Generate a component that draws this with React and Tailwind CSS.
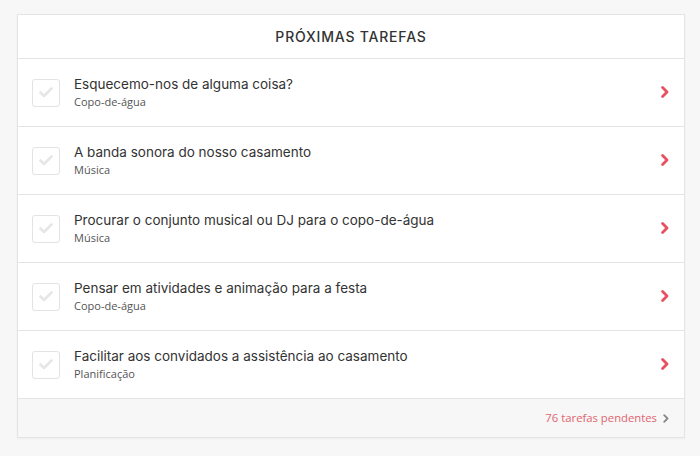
import React from 'react';

const tasks = [
    { title: 'Esquecemo-nos de alguma coisa?', category: 'Copo-de-água' },
    { title: 'A banda sonora do nosso casamento', category: 'Música' },
    { title: 'Procurar o conjunto musical ou DJ para o copo-de-água', category: 'Música' },
    { title: 'Pensar em atividades e animação para a festa', category: 'Copo-de-água' },
    { title: 'Facilitar aos convidados a assistência ao casamento', category: 'Planificação' },
];

const Check = () => (
    <div className="w-[28px] h-[28px] shrink-0 rounded-[3px] border border-[#e3e3e3] bg-white flex items-center justify-center">
        <svg width="14" height="11" viewBox="0 0 14 11" fill="none">
            <path d="M1.5 5.5 L5 9 L12.5 1.5" stroke="#e6e6e6" strokeWidth="2.6" strokeLinecap="round" strokeLinejoin="round" />
        </svg>
    </div>
);

const Chevron = ({ color = '#e8505f', w = 8, h = 12, sw = 2.8 }) => (
    <svg width={w} height={h} viewBox="0 0 8 12" fill="none">
        <path d="M1.6 1.6 L6 6 L1.6 10.4" stroke={color} strokeWidth={sw} strokeLinecap="round" strokeLinejoin="round" />
    </svg>
);

const App = () => {
    return (
        <div className="w-[700px] h-[456px] bg-[#f7f7f7] pt-[14px] pl-[17px]">
            <div className="w-[668px] bg-white border border-[#e4e4e4] shadow-[0_1px_2px_rgba(0,0,0,0.04)]">
                <div className="h-[44px] flex items-center justify-center border-b border-[#e4e4e4]">
                    <h2 className="text-[14px] tracking-[0.8px] font-medium text-[#333]" style={{ fontFamily: 'Inter, "Noto Sans", sans-serif' }}>PRÓXIMAS TAREFAS</h2>
                </div>
                {tasks.map((t, i) => (
                    <div key={i} className="h-[68px] flex items-center border-b border-[#e4e4e4] pl-[14px] pr-[15px]">
                        <Check />
                        <div className="ml-[14px] flex-1 flex flex-col">
                            <span className="text-[13.5px] leading-[18px] text-[#333]" style={{ fontFamily: 'Inter, "Noto Sans", sans-serif' }}>{t.title}</span>
                            <span className="text-[11px] leading-[16px] mt-[1px] text-[#555]" style={{ fontFamily: '"Open Sans", sans-serif' }}>{t.category}</span>
                        </div>
                        <div className="-mt-[2px]">
                            <Chevron />
                        </div>
                    </div>
                ))}
                <div className="h-[38px] bg-[#f7f7f7] flex items-center justify-end pr-[15px] gap-[6px]">
                    <span className="text-[11.3px] text-[#e0646f]" style={{ fontFamily: '"Open Sans", sans-serif' }}>76 tarefas pendentes</span>
                    <Chevron color="#888" w={6} h={9} sw={2.4} />
                </div>
            </div>
        </div>
    );
};

export default App;
